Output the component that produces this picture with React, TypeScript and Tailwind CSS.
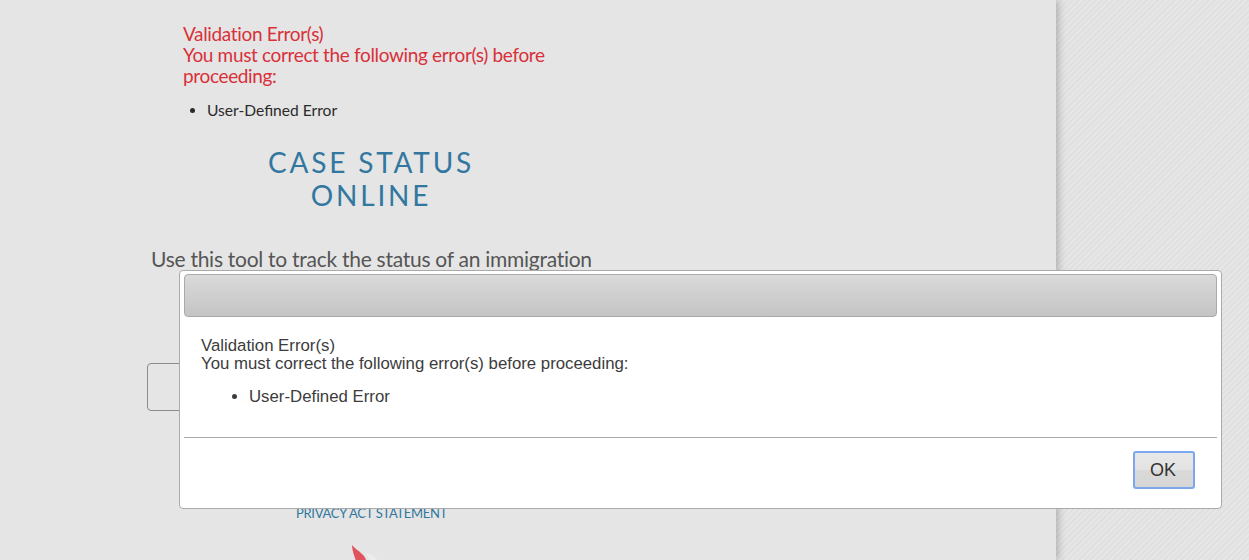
export default function App() {
  return (
    <div className="relative flex h-[560px] w-full overflow-hidden bg-[#e3e3e3] bg-[repeating-linear-gradient(135deg,#e6e6e6_0px,#e6e6e6_2px,#e0e0e0_2px,#e0e0e0_4px)]">
      {/* main panel */}
      <main className="h-full w-[1056px] shrink-0 bg-[#e5e5e5] pl-[147px] font-['Lato',sans-serif] shadow-[2px_0_8px_rgba(0,0,0,0.25)]">
        <div className="w-[448px]">
          <div className="ml-[36px] w-[376px] pt-[23px] text-[19px] leading-[21px] tracking-[-0.35px] text-[#d9303a]">
            <p>Validation Error(s)</p>
            <p>You must correct the following error(s) before proceeding:</p>
          </div>
          <ul className="ml-[60px] mt-[14px] list-disc text-[15.6px] leading-[20px] text-[#2b2b2b]">
            <li>User-Defined Error</li>
          </ul>
          <h1 className="ml-[36px] mt-[26px] w-[376px] text-center text-[28px] leading-[33px] tracking-[2.8px] text-[#31779f]">
            CASE STATUS
            <br />
            ONLINE
          </h1>
          <p className="ml-[4px] mt-[32px] whitespace-nowrap text-[21px] leading-[30px] tracking-[-0.27px] text-[#555555]">
            Use this tool to track the status of an immigration
          </p>
          <div className="mt-[89px] h-[48px] w-[200px] rounded-[4px] border border-[#8c8c8c]" />
          <a className="ml-[149px] mt-[93px] block whitespace-nowrap text-[13px] leading-[18px] tracking-[-0.3px] text-[#31779f]">
            PRIVACY ACT STATEMENT
          </a>
          <svg className="ml-[204px] mt-[23px]" width="40" height="16" viewBox="0 0 40 16">
            <path d="M1 0 C3 3 7 5 11 9 C13 11 15 13 15 16 L5 16 C3 10 1 5 1 0 Z" fill="#e0525c" />
            <path d="M14 8 C20 9 25 12 27 16 L18 16 C18 13 16 10 14 8 Z" fill="#ececec" />
          </svg>
        </div>
      </main>

      {/* modal dialog */}
      <div className="absolute left-[179px] top-[270px] flex h-[239px] w-[1043px] flex-col rounded-[4px] border border-[#aaaaaa] bg-white px-[4px] py-[3px] font-['Liberation_Sans',sans-serif] text-[#3c3c3c]">
        <div className="h-[43px] shrink-0 rounded-[4px] border border-[#aaaaaa] bg-gradient-to-b from-[#dadada] to-[#c4c4c4]" />
        <div className="h-[120px] shrink-0 px-[17px] pt-[20px] text-[16.8px] leading-[18px]">
          <p>Validation Error(s)</p>
          <p>You must correct the following error(s) before proceeding:</p>
          <ul className="ml-[48px] mt-[15px] list-disc">
            <li>User-Defined Error</li>
          </ul>
        </div>
        <div className="flex flex-1 items-start justify-end border-t border-[#aaaaaa] pr-[22px] pt-[13px]">
          <button className="h-[38px] w-[62px] rounded-[3px] border-2 border-[#7da7ec] bg-[linear-gradient(#e8e8e8_0%,#e3e3e3_50%,#d9d9d9_52%,#d6d6d6_100%)] pr-[2px] text-[18px] text-[#333333]">
            OK
          </button>
        </div>
      </div>
    </div>
  );
}
